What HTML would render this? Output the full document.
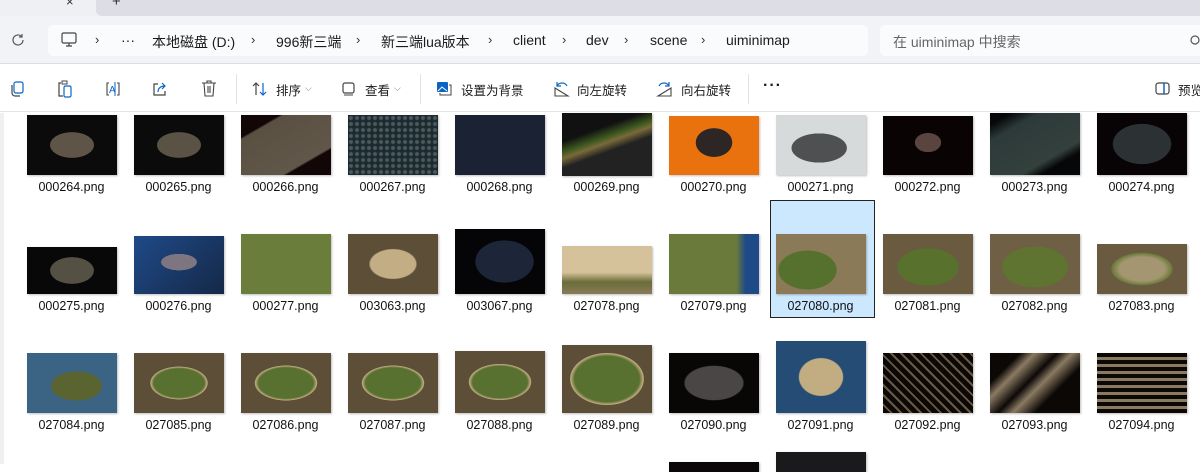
<!DOCTYPE html>
<html><head><meta charset="utf-8"><style>
*{margin:0;padding:0;box-sizing:border-box}
body{width:1200px;height:464px;overflow:hidden;background:#fff;font-family:"Liberation Sans","Noto Sans CJK SC",sans-serif;position:relative;color:#1b1b1b}
.a{position:absolute}
.tabs{left:0;top:0;width:1200px;height:16px;background:#eef0f4}
.tab2{left:96px;top:0;width:1104px;height:16px;background:#dcdde5;border-bottom-left-radius:6px}
.nav{left:0;top:16px;width:1200px;height:48px;background:#f2f3f6;border-bottom:1px solid #dcdde2}
.box{top:25px;height:31px;background:#fafbfd;border-radius:5px}
.t14{font-size:14px;top:32px;white-space:nowrap}
.chev{font-size:13px;top:32px;color:#333}
.tool{left:0;top:65px;width:1200px;height:47px;background:#fff;border-bottom:1px solid #e3e3e3}
.tt{font-size:12.5px;top:80px;white-space:nowrap;color:#1b1b1b}
.sep{top:74px;width:1px;height:30px;background:#e3e3e3}
.th{position:absolute;width:90px;box-shadow:1px 1px 2px rgba(0,0,0,.25)}
.lb{position:absolute;width:107px;text-align:center;font-size:12.5px;color:#111}
svg{position:absolute;overflow:visible}
</style></head><body>
<div class="a tabs"></div><div class="a tab2"></div>
<div class="a" style="left:66px;top:-6px;font-size:13px;color:#333">×</div>
<div class="a" style="left:112px;top:-7px;font-size:15px;color:#333">+</div>
<div class="a nav"></div>
<svg style="left:11px;top:33px" width="14" height="14" viewBox="0 0 14 14"><path d="M12 7a5 5 0 1 1-1.6-3.7M11 1v3H8" fill="none" stroke="#555" stroke-width="1.2"/></svg>
<div class="a box" style="left:48px;width:820px"></div>
<div class="a box" style="left:880px;width:330px"></div>
<svg style="left:61px;top:32px" width="16" height="16" viewBox="0 0 16 16"><rect x="1" y="1" width="14" height="10" rx="1.5" fill="none" stroke="#444" stroke-width="1.2"/><path d="M5 14h6M8 11v3" stroke="#444" stroke-width="1.2"/></svg>
<div class="a chev" style="left:95px">›</div>
<div class="a t14" style="left:121px;top:32px">···</div>
<div class="a t14" style="left:152px">本地磁盘 (D:)</div>
<div class="a chev" style="left:251px">›</div>
<div class="a t14" style="left:276px">996新三端</div>
<div class="a chev" style="left:356px">›</div>
<div class="a t14" style="left:381px">新三端lua版本</div>
<div class="a chev" style="left:488px">›</div>
<div class="a t14" style="left:513px">client</div>
<div class="a chev" style="left:562px">›</div>
<div class="a t14" style="left:586px">dev</div>
<div class="a chev" style="left:624px">›</div>
<div class="a t14" style="left:650px">scene</div>
<div class="a chev" style="left:701px">›</div>
<div class="a t14" style="left:726px">uiminimap</div>
<div class="a t14" style="left:893px;color:#666">在 uiminimap 中搜索</div>
<svg style="left:1190px;top:35px" width="12" height="12" viewBox="0 0 12 12"><circle cx="5" cy="5" r="4" fill="none" stroke="#555" stroke-width="1.2"/></svg>
<div class="a tool"></div>
<svg style="left:9px;top:81px" width="16" height="16" viewBox="0 0 16 16"><rect x="5" y="1" width="9" height="11" rx="2" fill="none" stroke="#0a64c8" stroke-width="1.2"/><path d="M3 4v8a3 3 0 0 0 3 3h5" fill="none" stroke="#444" stroke-width="1.2"/></svg>
<svg style="left:57px;top:80px" width="16" height="18" viewBox="0 0 16 18"><path d="M4 3H2v13h4" fill="none" stroke="#444" stroke-width="1.2"/><rect x="5" y="1" width="5" height="3" fill="none" stroke="#444"/><rect x="7" y="6" width="7" height="11" rx="1.5" fill="none" stroke="#0a64c8" stroke-width="1.2"/></svg>
<svg style="left:105px;top:81px" width="16" height="16" viewBox="0 0 16 16"><path d="M4 2H2v12h2M12 2h2v12h-2" fill="none" stroke="#444" stroke-width="1.1"/><text x="4" y="12" font-size="10" fill="#0a64c8" font-family="Liberation Sans">A</text><path d="M10 1v14" stroke="#0a64c8"/></svg>
<svg style="left:152px;top:81px" width="16" height="16" viewBox="0 0 16 16"><path d="M6 3H2v11h11v-4" fill="none" stroke="#444" stroke-width="1.2"/><path d="M6 11c0-4 3-6 7-6M10 2l3 3-3 3" fill="none" stroke="#0a64c8" stroke-width="1.2"/></svg>
<svg style="left:201px;top:80px" width="16" height="17" viewBox="0 0 16 17"><path d="M1 3h14M6 3V1h4v2M3 3l1 13h8l1-13M7 6v7M9 6v7" fill="none" stroke="#444" stroke-width="1.1"/></svg>
<div class="a sep" style="left:236px"></div>
<svg style="left:252px;top:81px" width="16" height="16" viewBox="0 0 16 16"><path d="M4 14V2M1 5l3-3 3 3" fill="none" stroke="#444" stroke-width="1.2"/><path d="M11 2v12M8 11l3 3 3-3" fill="none" stroke="#0a64c8" stroke-width="1.2"/></svg>
<div class="a tt" style="left:276px">排序</div><div class="a tt" style="left:305px;font-size:9px;top:83px;color:#777">⌵</div>
<svg style="left:342px;top:82px" width="14" height="14" viewBox="0 0 14 14"><rect x="1" y="1" width="11" height="10" rx="2" fill="none" stroke="#444" stroke-width="1.2"/><path d="M2 13h9" stroke="#444"/></svg>
<div class="a tt" style="left:365px">查看</div><div class="a tt" style="left:394px;font-size:9px;top:83px;color:#777">⌵</div>
<div class="a sep" style="left:420px"></div>
<svg style="left:436px;top:81px" width="16" height="15" viewBox="0 0 16 15"><rect x="1" y="1" width="11" height="10" rx="1" fill="#0a64c8"/><path d="M13 4h2v10H4v-2" fill="none" stroke="#444"/><path d="M2 10l4-4 5 4" fill="none" stroke="#fff"/></svg>
<div class="a tt" style="left:461px">设置为背景</div>
<svg style="left:553px;top:80px" width="16" height="17" viewBox="0 0 16 17"><path d="M2 16h13L2 8z" fill="none" stroke="#444" stroke-width="1.1"/><path d="M4 6c2-4 8-4 10 0M4 2v4h4" fill="none" stroke="#0a64c8" stroke-width="1.2"/></svg>
<div class="a tt" style="left:577px">向左旋转</div>
<svg style="left:657px;top:80px" width="16" height="17" viewBox="0 0 16 17"><path d="M14 16H1l13-8z" fill="none" stroke="#444" stroke-width="1.1"/><path d="M12 6C10 2 4 2 2 6M12 2v4H8" fill="none" stroke="#0a64c8" stroke-width="1.2"/></svg>
<div class="a tt" style="left:681px">向右旋转</div>
<div class="a sep" style="left:748px"></div>
<div class="a tt" style="left:763px;top:77px;font-size:16px;font-weight:bold;letter-spacing:1px">···</div>
<svg style="left:1155px;top:82px" width="15" height="13" viewBox="0 0 15 13"><rect x="1" y="1" width="13" height="11" rx="2.5" fill="none" stroke="#444" stroke-width="1.2"/><path d="M9 1v11" stroke="#0a64c8" stroke-width="1.5"/></svg>
<div class="a tt" style="left:1178px">预览</div>
<div class="a" style="left:0;top:113px;width:4px;height:351px;background:#f0f0f0"></div>
<div class="a" style="left:770px;top:200px;width:105px;height:118px;background:#cce8ff;border:1px solid #222"></div>
<!-- row1 -->
<div class="th" style="left:27px;top:115px;height:60px;background:radial-gradient(ellipse 40% 35% at 50% 50%,#5e5548 60%,transparent 62%),#0b0b0b"></div>
<div class="th" style="left:134px;top:115px;height:60px;background:radial-gradient(ellipse 40% 35% at 50% 50%,#5a5245 60%,transparent 62%),#0b0b0b"></div>
<div class="th" style="left:241px;top:115px;height:60px;background:linear-gradient(150deg,#120606 20%,#5a5042 22%,#60574a 75%,#120606 77%)"></div>
<div class="th" style="left:348px;top:115px;height:60px;background:radial-gradient(circle,#4d5a5c 1.5px,#1b2a30 2.5px) 0 0/6px 6px,#1b2a30"></div>
<div class="th" style="left:455px;top:115px;height:60px;background:#1b2233"></div>
<div class="th" style="left:562px;top:113px;height:63px;background:linear-gradient(160deg,#111 30%,#3f5a20 42%,#7a6a3a 48%,#222 58%)"></div>
<div class="th" style="left:669px;top:116px;height:59px;background:radial-gradient(ellipse 25% 30% at 50% 45%,#2e2624 80%,transparent 82%),#ea720e"></div>
<div class="th" style="left:776px;top:115px;height:60px;background:radial-gradient(ellipse 38% 30% at 48% 55%,#4e5052 80%,transparent 82%),#d6dadb"></div>
<div class="th" style="left:883px;top:116px;height:59px;background:radial-gradient(ellipse 18% 20% at 50% 45%,#5a4440 80%,transparent 82%),#0a0304"></div>
<div class="th" style="left:990px;top:113px;height:62px;background:linear-gradient(150deg,#050708 10%,#2d3a3a 25%,#33403c 70%,#050708 80%)"></div>
<div class="th" style="left:1097px;top:113px;height:62px;background:radial-gradient(ellipse 40% 40% at 50% 50%,#2c3234 80%,transparent 82%),#080405"></div>
<!-- row2 -->
<div class="th" style="left:27px;top:247px;height:47px;background:radial-gradient(ellipse 30% 35% at 50% 50%,#555044 80%,transparent 82%),#080808"></div>
<div class="th" style="left:134px;top:236px;height:58px;background:radial-gradient(ellipse 28% 20% at 50% 45%,#7d7680 70%,transparent 72%),linear-gradient(135deg,#1f4a88,#152848)"></div>
<div class="th" style="left:241px;top:234px;height:60px;background:#6b7d3a"></div>
<div class="th" style="left:348px;top:234px;height:60px;background:radial-gradient(ellipse 42% 40% at 50% 50%,#c3ad84 60%,transparent 64%),#5d4e38"></div>
<div class="th" style="left:455px;top:229px;height:65px;background:radial-gradient(ellipse 40% 40% at 55% 50%,#1d2538 80%,transparent 82%),#050507"></div>
<div class="th" style="left:562px;top:246px;height:48px;background:linear-gradient(180deg,#d6c29a 55%,#6a6d3a 75%,#8a7b5a)"></div>
<div class="th" style="left:669px;top:234px;height:60px;background:linear-gradient(90deg,#6a7a3a 75%,#1f4a88 85%)"></div>
<div class="th" style="left:776px;top:234px;height:60px;background:radial-gradient(ellipse 40% 40% at 35% 60%,#56702e 80%,transparent 82%),#8a7a58"></div>
<div class="th" style="left:883px;top:234px;height:60px;background:radial-gradient(ellipse 42% 38% at 50% 55%,#58722e 80%,transparent 82%),#6a5a40"></div>
<div class="th" style="left:990px;top:234px;height:60px;background:radial-gradient(ellipse 45% 42% at 50% 55%,#5e7430 80%,transparent 82%),#6e5f45"></div>
<div class="th" style="left:1097px;top:244px;height:50px;background:radial-gradient(ellipse 42% 40% at 50% 50%,#a39670 60%,#6b7a3a 80%,transparent 82%),#6a5a40"></div>
<!-- row3 -->
<div class="th" style="left:27px;top:353px;height:60px;background:radial-gradient(ellipse 35% 30% at 55% 55%,#5a6430 80%,transparent 82%),#3b6384"></div>
<div class="th" style="left:134px;top:353px;height:60px;background:radial-gradient(ellipse 35% 30% at 50% 50%,#587030 80%,#c2ad82 90%,transparent 92%),#5d4e38"></div>
<div class="th" style="left:241px;top:353px;height:60px;background:radial-gradient(ellipse 38% 32% at 50% 50%,#587030 80%,#c2ad82 90%,transparent 92%),#5d4e38"></div>
<div class="th" style="left:348px;top:353px;height:60px;background:radial-gradient(ellipse 38% 32% at 50% 50%,#587030 80%,#c2ad82 90%,transparent 92%),#5d4e38"></div>
<div class="th" style="left:455px;top:351px;height:62px;background:radial-gradient(ellipse 38% 32% at 50% 50%,#587030 80%,#c2ad82 90%,transparent 92%),#5d4e38"></div>
<div class="th" style="left:562px;top:345px;height:68px;background:radial-gradient(ellipse 45% 42% at 50% 50%,#587030 80%,#c2ad82 90%,transparent 92%),#5d4e38"></div>
<div class="th" style="left:669px;top:353px;height:60px;background:radial-gradient(ellipse 40% 35% at 50% 50%,#4a4646 80%,transparent 84%),#090606"></div>
<div class="th" style="left:776px;top:341px;height:72px;background:radial-gradient(ellipse 30% 32% at 50% 50%,#c2ad82 80%,transparent 84%),#254c74"></div>
<div class="th" style="left:883px;top:353px;height:60px;background:repeating-linear-gradient(45deg,#0c0806 0 5px,#6a5a45 5px 7px),#0c0806"></div>
<div class="th" style="left:990px;top:353px;height:60px;background:linear-gradient(135deg,#0c0806 20%,#8a7a62 30%,#0c0806 45%,#8a7a62 55%,#0c0806 70%),#0c0806"></div>
<div class="th" style="left:1097px;top:353px;height:60px;background:repeating-linear-gradient(0deg,#0c0806 0 4px,#8a7a62 4px 7px)"></div>
<!-- row4 -->
<div class="th" style="left:669px;top:462px;height:10px;background:#0a0808"></div>
<div class="th" style="left:776px;top:452px;height:20px;background:#1a1a1c"></div>
<!-- labels -->
<div class="lb" style="left:18px;top:180px">000264.png</div><div class="lb" style="left:125px;top:180px">000265.png</div><div class="lb" style="left:232px;top:180px">000266.png</div><div class="lb" style="left:339px;top:180px">000267.png</div><div class="lb" style="left:446px;top:180px">000268.png</div><div class="lb" style="left:553px;top:180px">000269.png</div><div class="lb" style="left:660px;top:180px">000270.png</div><div class="lb" style="left:767px;top:180px">000271.png</div><div class="lb" style="left:874px;top:180px">000272.png</div><div class="lb" style="left:981px;top:180px">000273.png</div><div class="lb" style="left:1088px;top:180px">000274.png</div>
<div class="lb" style="left:18px;top:299px">000275.png</div><div class="lb" style="left:125px;top:299px">000276.png</div><div class="lb" style="left:232px;top:299px">000277.png</div><div class="lb" style="left:339px;top:299px">003063.png</div><div class="lb" style="left:446px;top:299px">003067.png</div><div class="lb" style="left:553px;top:299px">027078.png</div><div class="lb" style="left:660px;top:299px">027079.png</div><div class="lb" style="left:767px;top:299px">027080.png</div><div class="lb" style="left:874px;top:299px">027081.png</div><div class="lb" style="left:981px;top:299px">027082.png</div><div class="lb" style="left:1088px;top:299px">027083.png</div>
<div class="lb" style="left:18px;top:418px">027084.png</div><div class="lb" style="left:125px;top:418px">027085.png</div><div class="lb" style="left:232px;top:418px">027086.png</div><div class="lb" style="left:339px;top:418px">027087.png</div><div class="lb" style="left:446px;top:418px">027088.png</div><div class="lb" style="left:553px;top:418px">027089.png</div><div class="lb" style="left:660px;top:418px">027090.png</div><div class="lb" style="left:767px;top:418px">027091.png</div><div class="lb" style="left:874px;top:418px">027092.png</div><div class="lb" style="left:981px;top:418px">027093.png</div><div class="lb" style="left:1088px;top:418px">027094.png</div>
</body></html>
